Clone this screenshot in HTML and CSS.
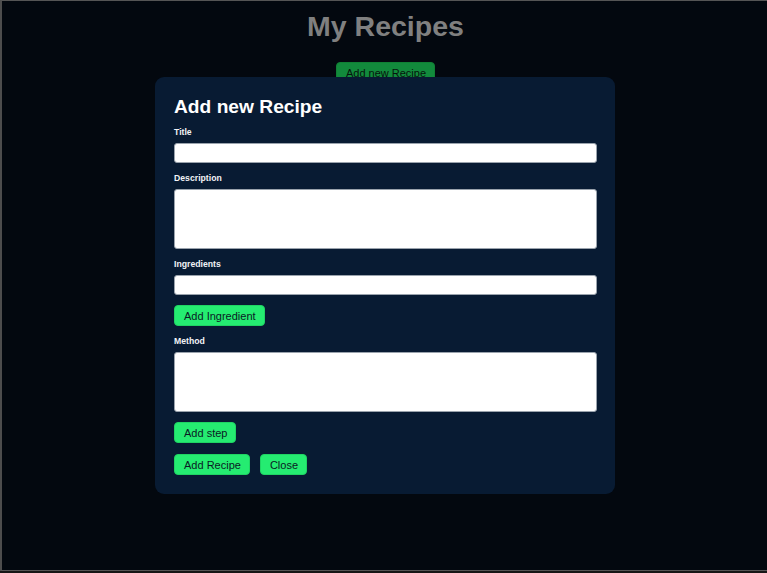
FILE: index.html
```html
<!DOCTYPE html>
<html>
<head>
<meta charset="utf-8">
<link rel="stylesheet" href="styles.css">
</head>
<body>
<div class="app">
  <h1 class="app-title">My Recipes</h1>
  <button class="btn btn-dim">Add new Recipe</button>
</div>
<div class="overlay">
  <div class="modal">
    <h2 class="modal-title">Add new Recipe</h2>
    <div class="field">
      <label class="label">Title</label>
      <input class="input" type="text">
    </div>
    <div class="field">
      <label class="label">Description</label>
      <textarea class="input area"></textarea>
    </div>
    <div class="field">
      <label class="label">Ingredients</label>
      <input class="input" type="text">
    </div>
    <div class="actions"><button class="btn">Add Ingredient</button></div>
    <div class="field">
      <label class="label">Method</label>
      <textarea class="input area"></textarea>
    </div>
    <div class="actions"><button class="btn">Add step</button></div>
    <div class="actions last"><button class="btn">Add Recipe</button><button class="btn">Close</button></div>
  </div>
</div>
</body>
</html>
```
FILE: styles.css
```css
html { background: #161616; }
body {
  margin: 0;
  font-family: "Liberation Sans", Arial, sans-serif;
}
.app {
  box-sizing: border-box;
  height: 571px;
  background: #03080f;
  border-top: 1px solid #555;
  border-left: 2px solid #4d4d4d;
  border-bottom: 1px solid #555;
  padding-left: 2px;
  display: flex;
  flex-direction: column;
  align-items: center;
}
.app-title {
  margin: 7px 0 0;
  font-size: 28.5px;
  line-height: 36px;
  font-weight: bold;
  color: #808080;
}
.btn {
  font-family: "Liberation Sans", Arial, sans-serif;
  font-size: 11px;
  height: 21px;
  padding: 0 8px 0 9px;
  border: 1px solid #1fd463;
  border-radius: 4px;
  background: #25ec71;
  color: #0a1a24;
  cursor: pointer;
}
.btn-dim {
  margin-top: 18px;
  background: #128a3c;
  border-color: #108034;
  color: #06140c;
}
.overlay {
  position: fixed;
  inset: 0;
  display: flex;
  justify-content: center;
  align-items: flex-start;
  padding-top: 77px;
  padding-left: 3px;
  box-sizing: border-box;
}
.modal {
  box-sizing: border-box;
  width: 460px;
  background: #081b33;
  border-radius: 9px;
  padding: 19px 18px 19px 19px;
  display: flex;
  flex-direction: column;
}
.modal-title {
  margin: 0 0 8px;
  font-size: 19.2px;
  line-height: 22px;
  font-weight: bold;
  color: #ffffff;
}
.field {
  display: flex;
  flex-direction: column;
  margin-bottom: 9px;
}
.label {
  font-size: 8.7px;
  line-height: 12px;
  font-weight: bold;
  color: #f2f4f7;
  margin-bottom: 5px;
}
.input {
  box-sizing: border-box;
  height: 20px;
  margin: 0;
  border: 1px solid #9aa3ad;
  border-radius: 3px;
  background: #fff;
  font-family: inherit;
  padding: 2px 4px;
}
.area {
  height: 60px;
  resize: none;
}
.actions {
  display: flex;
  gap: 10px;
  margin-top: 1px;
  margin-bottom: 9px;
}
.actions.last { margin-top: 2px; margin-bottom: 0; }
```
